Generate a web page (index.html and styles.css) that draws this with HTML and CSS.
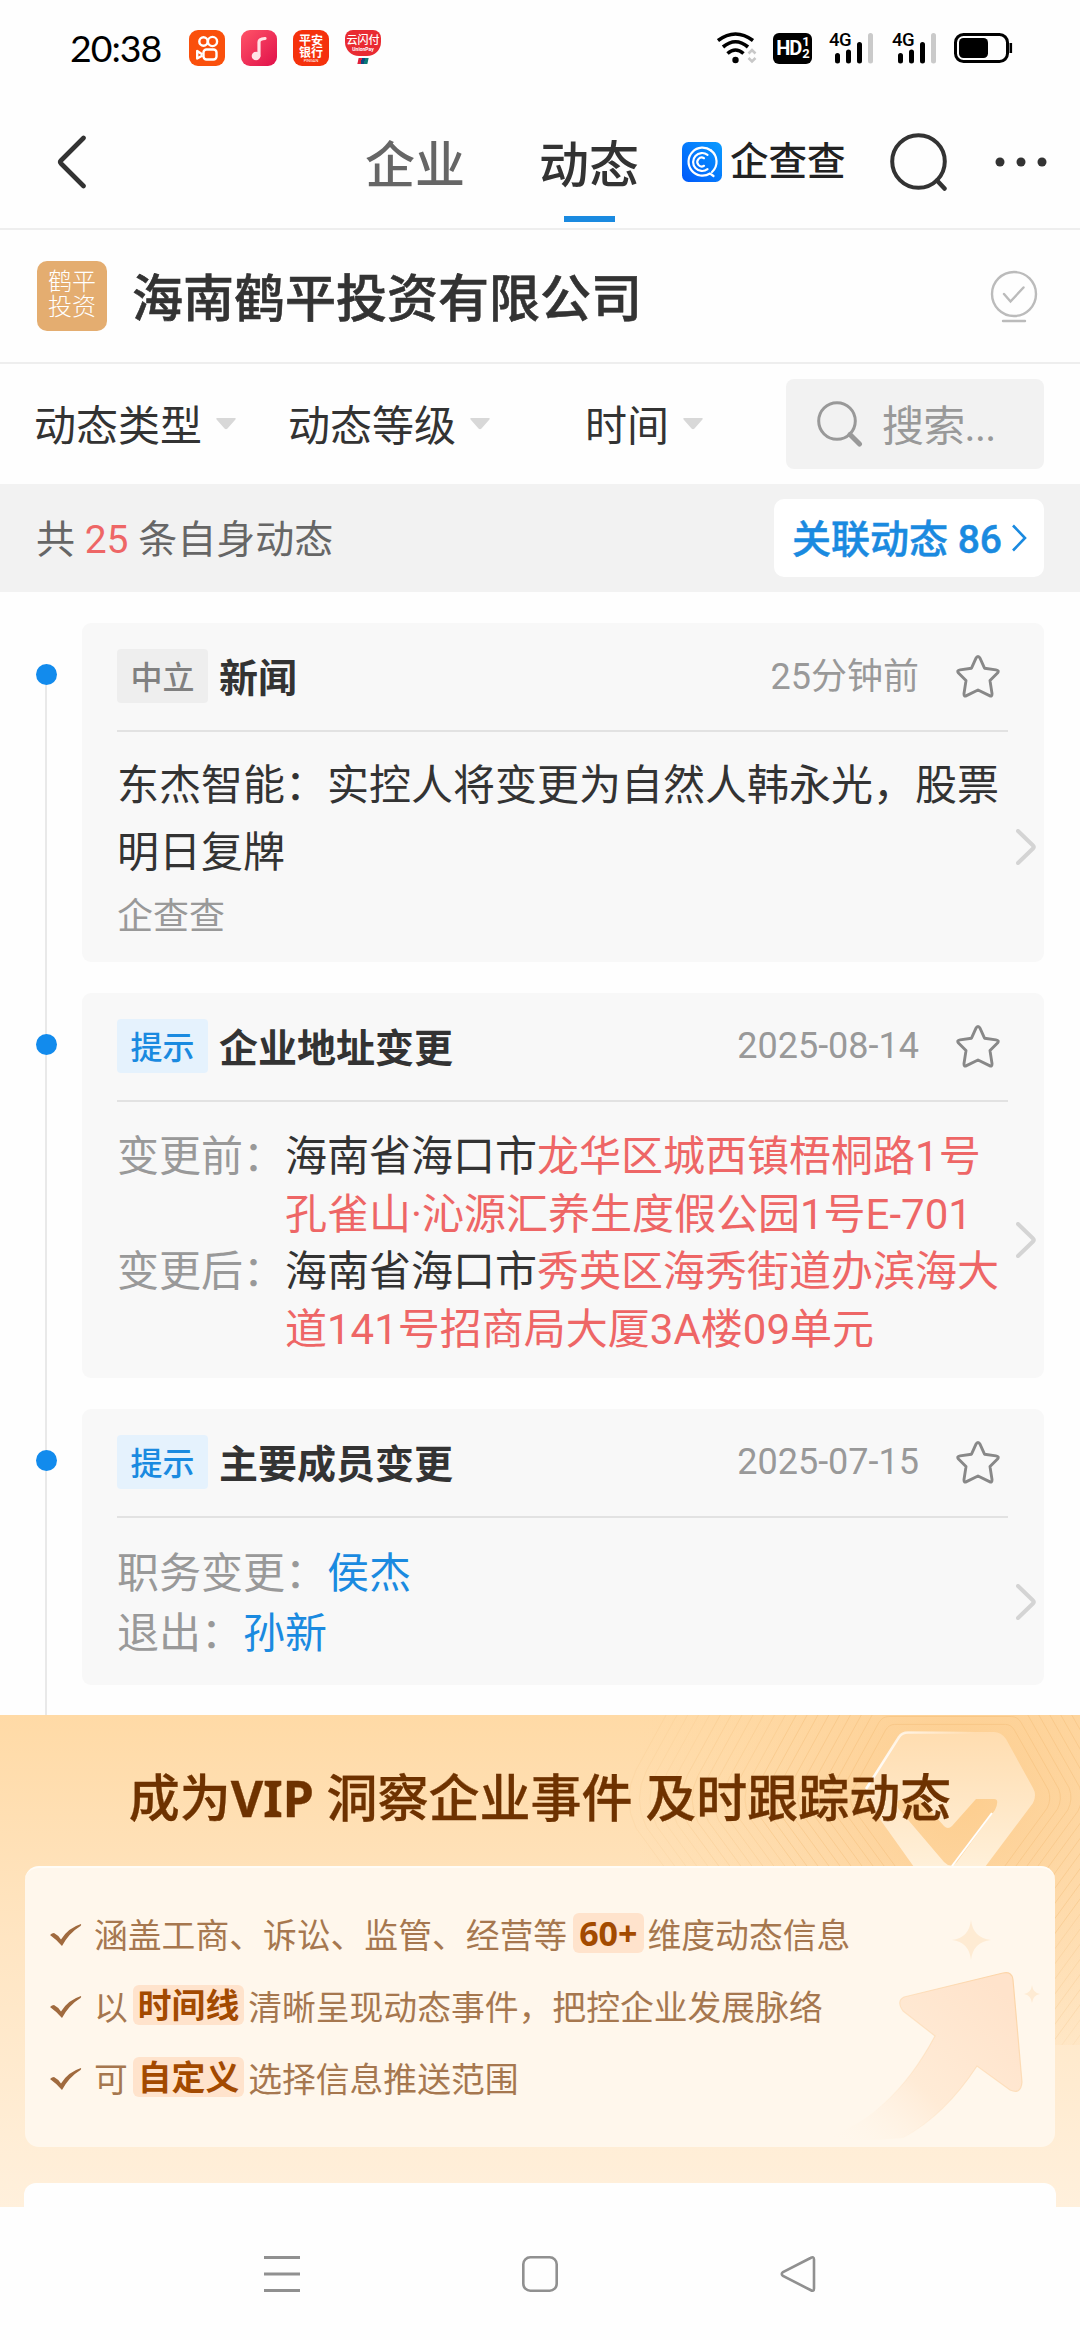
FILE: index.html
```html
<!DOCTYPE html>
<html lang="zh-CN">
<head>
<meta charset="utf-8">
<title>企查查 - 动态</title>
<link rel="stylesheet" href="styles.css">
</head>
<body>
<svg width="0" height="0" class="defs">
  <symbol id="star" viewBox="0 0 44 44"><path d="M22 2.500Q23.200 2.500 24 4.200L28.500 14.200L40 15.900Q43.500 16.500 41.500 19L34 26.600L36 39.500Q36.200 43 33.500 41.600L22 36L10.500 41.600Q7.800 43 8 39.500L10 26.600L2.500 19Q.5 16.500 4 15.900L15.500 14.200L20 4.200Q20.800 2.500 22 2.500Z" fill="none" stroke="#888" stroke-width="2.900" stroke-linejoin="round"/></symbol>
  <symbol id="more" viewBox="0 0 20 36"><path d="M2 2L17 16.500Q18.500 18 17 19.500L2 34" fill="none" stroke="#d4d4d4" stroke-width="4" stroke-linecap="round"/></symbol>
  <symbol id="tri" viewBox="0 0 20 12"><path d="M1 0H19Q20.500 .5 19 2L11.500 10.500Q10 12 8.500 10.500L1 2Q-.5 .5 1 0Z" fill="#d8d8d8"/></symbol>
  <symbol id="tick" viewBox="0 0 32 24"><path d="M0 12Q2 10 4 10Q8 12 11 16.500Q18 5 31 1Q31.500 2 30.500 3Q19 10 12 23Q7 17 0 12Z" fill="#a06a3e"/></symbol>
  <symbol id="bars" viewBox="0 0 46 32"><path d="M8.500 23.500V29M19.500 20V29M30.500 12.500V29" stroke="#000" stroke-width="5" stroke-linecap="round"/><path d="M41.500 3.500V29" stroke="#cacaca" stroke-width="5" stroke-linecap="round"/></symbol>
</svg>
<div class="screen">
  <header class="status">
    <span class="clock">20:38</span>
    <div class="apps">
      <svg width="36" height="36" viewBox="0 0 36 36"><rect width="36" height="36" rx="9" fill="#fa500c"/><g fill="none" stroke="#fff" stroke-width="2.400"><circle cx="14.500" cy="11.500" r="4.200"/><circle cx="23.500" cy="11.500" r="4.600"/><rect x="14.500" y="19.500" width="13" height="10" rx="3"/><path d="M13.500 24.500L8.200 21V28.500L13.500 25.500" stroke-linejoin="round"/></g></svg>
      <svg width="36" height="36" viewBox="0 0 36 36"><defs><linearGradient id="mg" x1="0" y1="0" x2="1" y2="1"><stop offset="0" stop-color="#ff5468"/><stop offset="1" stop-color="#e0104a"/></linearGradient></defs><rect width="36" height="36" rx="9" fill="url(#mg)"/><circle cx="15" cy="26" r="4.300" fill="#ffe3e6"/><path d="M18 26V12Q18 9 24 8.500" fill="none" stroke="#ffe3e6" stroke-width="3.200" stroke-linecap="round"/></svg>
      <div class="bank"><b>平安</b><b>银行</b><i>PINGAN</i></div>
      <div class="pay"><div class="pay-face"><b>云闪付</b><i>UnionPay</i></div><div class="pay-stem"></div></div>
    </div>
    <div class="indicators">
      <svg width="40" height="32" viewBox="0 0 40 32"><g fill="none" stroke="#000" stroke-width="3.600"><path d="M1 8.500Q18.500-4.500 36 8.500"/><path d="M6 15Q18.500 4.500 31 15"/><path d="M10.500 21.500Q18.500 14.500 26.500 21.500"/></g><circle cx="18.500" cy="28" r="3.200"/><path d="M31.500 21.500L35 18L38.500 21.500M31.500 26L35 29.500L38.500 26" fill="none" stroke="#c8c8c8" stroke-width="2.600"/></svg>
      <div class="hd"><b>HD</b><span><b>1</b><b>2</b></span></div>
      <div class="sig"><svg width="46" height="32"><use href="#bars"/></svg><span>4G</span></div>
      <div class="sig"><svg width="46" height="32"><use href="#bars"/></svg><span>4G</span></div>
      <svg width="60" height="32" viewBox="0 0 60 32"><rect x="1.500" y="2.500" width="52" height="27" rx="8" fill="none" stroke="#000" stroke-width="3"/><rect x="5" y="6" width="29" height="20" rx="4.500"/><path d="M56.800 11V21" stroke="#000" stroke-width="2.600"/></svg>
    </div>
  </header>

  <nav class="topbar">
    <svg class="back" width="30" height="54" viewBox="0 0 30 54"><path d="M27.500 3L5 25.500Q3.500 27 5 28.500L27.500 51" fill="none" stroke="#333" stroke-width="4.600" stroke-linecap="round"/></svg>
    <span class="tab">企业</span>
    <span class="tab active">动态</span>
    <div class="brand">
      <svg width="40" height="40" viewBox="0 0 40 40"><defs><linearGradient id="bg" x1="0" y1="1" x2="1" y2="0"><stop offset="0" stop-color="#0058fa"/><stop offset="1" stop-color="#0a9cff"/></linearGradient></defs><rect width="40" height="40" rx="6.500" fill="url(#bg)"/><g fill="none" stroke="#fff" stroke-width="2.200" stroke-linecap="round"><path d="M29 8.500A14 14 0 1 0 28 31.500L31.500 34"/><path d="M29 8.500A14 14 0 0 1 30 30"/><path d="M25.500 12.800A9 9 0 1 0 25.500 27.200"/><path d="M22 16.200A4.400 4.400 0 1 0 22 23.800"/></g></svg>
      <span>企查查</span>
    </div>
    <svg class="find" width="58" height="58" viewBox="0 0 58 58"><circle cx="28.500" cy="28.500" r="26.300" fill="none" stroke="#333" stroke-width="4"/><path d="M47 47.500L54.500 55.500" stroke="#333" stroke-width="4.500" stroke-linecap="round"/></svg>
    <svg class="dots" width="52" height="10" viewBox="0 0 52 10"><g fill="#333"><circle cx="5" cy="5" r="4.500"/><circle cx="26" cy="5" r="4.500"/><circle cx="47" cy="5" r="4.500"/></g></svg>
  </nav>

  <section class="company">
    <div class="logo">鹤平<br>投资</div>
    <h1>海南鹤平投资有限公司</h1>
    <svg width="48" height="56" viewBox="0 0 48 56"><g fill="none" stroke="#bbb" stroke-width="2.400" stroke-linecap="round"><circle cx="24" cy="24" r="22"/><path d="M14 24L20.500 31.500L33.500 17.500"/><path d="M13 51H35"/></g></svg>
  </section>

  <section class="filters">
    <div class="filter"><span>动态类型</span><svg width="20" height="12"><use href="#tri"/></svg></div>
    <div class="filter level"><span>动态等级</span><svg width="20" height="12"><use href="#tri"/></svg></div>
    <div class="filter time"><span>时间</span><svg width="20" height="12"><use href="#tri"/></svg></div>
    <div class="search"><svg width="46" height="46" viewBox="0 0 46 46"><circle cx="20" cy="20" r="18.300" fill="none" stroke="#999" stroke-width="3"/><path d="M33 33.500L42.500 43" stroke="#999" stroke-width="5" stroke-linecap="round"/></svg><span>搜索...</span></div>
  </section>

  <section class="summary">
    <p>共 <em>25</em> 条自身动态</p>
    <div class="related"><span>关联动态 86</span><svg width="18" height="28" viewBox="0 0 18 28"><path d="M3 1.500L15 14L3 26.500" fill="none" stroke="#1a8ae0" stroke-width="2.600"/></svg></div>
  </section>

  <main class="timeline">
    <article class="card news">
      <div class="head"><span class="tag">中立</span><h2>新闻</h2><time>25分钟前</time><svg width="44" height="44"><use href="#star"/></svg></div>
      <div class="body">
        <p>东杰智能：实控人将变更为自然人韩永光，股票<br>明日复牌</p>
        <small>企查查</small>
        <svg class="more" width="20" height="36"><use href="#more"/></svg>
      </div>
    </article>
    <article class="card address">
      <div class="head"><span class="tag hint">提示</span><h2>企业地址变更</h2><time>2025-08-14</time><svg width="44" height="44"><use href="#star"/></svg></div>
      <div class="body">
        <div class="field"><span>变更前：</span><p>海南省海口市<em>龙华区城西镇梧桐路1号<br>孔雀山·沁源汇养生度假公园1号E-701</em></p></div>
        <div class="field"><span>变更后：</span><p>海南省海口市<em>秀英区海秀街道办滨海大<br>道141号招商局大厦3A楼09单元</em></p></div>
        <svg class="more" width="20" height="36"><use href="#more"/></svg>
      </div>
    </article>
    <article class="card member">
      <div class="head"><span class="tag hint">提示</span><h2>主要成员变更</h2><time>2025-07-15</time><svg width="44" height="44"><use href="#star"/></svg></div>
      <div class="body">
        <div class="field"><span>职务变更：</span><a>侯杰</a></div>
        <div class="field"><span>退出：</span><a>孙新</a></div>
        <svg class="more" width="20" height="36"><use href="#more"/></svg>
      </div>
    </article>
  </main>

  <section class="vip">
    <svg class="deco" width="560" height="330" viewBox="520 1715 560 330">
      <defs>
        <linearGradient id="hex" x1="0" y1="0" x2="0" y2="1"><stop offset="0" stop-color="#ffddb0"/><stop offset="1" stop-color="#fff0d9"/></linearGradient>
        <linearGradient id="edge" x1="0" y1="0" x2="1" y2="0"><stop offset="0" stop-color="#fff"/><stop offset="1" stop-color="#fff" stop-opacity="0"/></linearGradient>
        <radialGradient id="glow" cx="960" cy="1790" r="330" gradientUnits="userSpaceOnUse"><stop offset="0" stop-color="#fdcd8d"/><stop offset=".4" stop-color="#fdd095" stop-opacity=".55"/><stop offset="1" stop-color="#ffd9a2" stop-opacity="0"/></radialGradient>
        <path id="ring" d="M-49-66H49Q54-66 57-61L87-8Q90 0 86 8L8 115Q0 122-8 115L-86 8Q-90 0-86-8L-57-61Q-54-66-49-66Z" fill="none" stroke="#f0b468" vector-effect="non-scaling-stroke"/>
      </defs>
      <rect x="520" y="1715" width="560" height="330" fill="url(#glow)"/>
      <g opacity=".32" transform="translate(950 1799)">
        <use href="#ring" transform="scale(1.13)"/><use href="#ring" transform="scale(1.25)"/><use href="#ring" transform="scale(1.37)"/><use href="#ring" transform="scale(1.49)"/><use href="#ring" transform="scale(1.61)"/><use href="#ring" transform="scale(1.73)"/><use href="#ring" transform="scale(1.85)"/><use href="#ring" transform="scale(1.97)"/><use href="#ring" transform="scale(2.09)"/><use href="#ring" transform="scale(2.21)"/>
        <g opacity=".6"><use href="#ring" transform="scale(2.33)"/><use href="#ring" transform="scale(2.45)"/><use href="#ring" transform="scale(2.57)"/><use href="#ring" transform="scale(2.69)"/><use href="#ring" transform="scale(2.81)"/><use href="#ring" transform="scale(2.93)"/><use href="#ring" transform="scale(3.05)"/></g>
        <g opacity=".35"><use href="#ring" transform="scale(3.17)"/><use href="#ring" transform="scale(3.29)"/><use href="#ring" transform="scale(3.41)"/><use href="#ring" transform="scale(3.53)"/><use href="#ring" transform="scale(3.65)"/></g>
      </g>
      <path fill-rule="evenodd" fill="url(#hex)" d="M908 1732H994Q1001 1732 1006 1739L1033 1788Q1037 1795 1033 1803L985 1867H914L867 1801Q863 1795 867 1787L899 1737Q902 1732 908 1732ZM976 1799L952 1826Q948 1830 944 1826L921 1800H900Q894 1801 898 1808L944 1862Q951 1869 957 1862L995 1810Q1000 1799 994 1799Z"/>
      <path d="M866 1789L899 1737Q902 1732.500 908 1732.500H975" fill="none" stroke="url(#edge)" stroke-width="2.500"/>
      <path d="M952 1866L992 1813" stroke="#fff" stroke-width="2"/>
    </svg>
    <h2>成为<b>VIP</b> 洞察企业事件 及时跟踪动态</h2>
    <div class="perks">
      <svg class="arrow" width="240" height="240" viewBox="815 1907 240 240">
        <defs><linearGradient id="ar" x1="1000" y1="1990" x2="840" y2="2150" gradientUnits="userSpaceOnUse"><stop offset="0" stop-color="#ffe3cb"/><stop offset=".55" stop-color="#ffebd6"/><stop offset="1" stop-color="#fff7ec" stop-opacity="0"/></linearGradient><linearGradient id="ae" x1="1010" y1="1990" x2="880" y2="2120" gradientUnits="userSpaceOnUse"><stop offset="0" stop-color="#fcd5a8"/><stop offset="1" stop-color="#fcd5a8" stop-opacity="0"/></linearGradient></defs>
        <path d="M904 1997L1003 1973Q1012 1971 1013 1980L1022 2082Q1021 2095 1010 2090L977 2066Q945 2115 903 2138Q860 2142 820 2139Q890 2120 935 2036L903 2011Q896 2001 904 1997Z" fill="url(#ar)" stroke="url(#ae)" stroke-width="1.200"/>
        <path d="M971 1920Q973 1938 991 1940Q973 1942 971 1960Q969 1942 952 1940Q969 1938 971 1920ZM1032 1985Q1033 1993 1040 1994Q1033 1995 1032 2003Q1031 1995 1024 1994Q1031 1993 1032 1985Z" fill="#feebd3"/>
      </svg>
      <div class="perk"><svg width="32" height="24"><use href="#tick"/></svg><span>涵盖工商、诉讼、监管、经营等</span><mark class="num">60+</mark><span>维度动态信息</span></div>
      <div class="perk"><svg width="32" height="24"><use href="#tick"/></svg><span>以</span><mark>时间线</mark><span>清晰呈现动态事件，把控企业发展脉络</span></div>
      <div class="perk"><svg width="32" height="24"><use href="#tick"/></svg><span>可</span><mark>自定义</mark><span>选择信息推送范围</span></div>
    </div>
    <div class="sheet"></div>
  </section>

  <footer class="sysnav">
    <svg width="36" height="38" viewBox="0 0 36 38"><path d="M0 2.500H36M0 19H36M0 35.500H36" stroke="#909090" stroke-width="3"/></svg>
    <svg width="36" height="38" viewBox="0 0 36 38"><rect x="1.300" y="2.300" width="33.400" height="33.400" rx="7" fill="none" stroke="#909090" stroke-width="2.600"/></svg>
    <svg width="36" height="38" viewBox="0 0 36 38"><path d="M30.500 3Q34 1 34 4.500V33.500Q34 37 30.500 35L3 21Q.5 19 3 17Z" fill="none" stroke="#909090" stroke-width="2.600"/></svg>
  </footer>
</div>
</body>
</html>
```
FILE: styles.css
```css
* { box-sizing: border-box; }
body, h1, h2, p { margin: 0; }
body {
  background: #fff;
  color: #333;
  font-family: Roboto, "Noto Sans CJK SC", sans-serif;
}
em, i { font-style: normal; }
svg { flex: none; display: block; }
.defs { position: absolute; }
.screen { width: 1080px; height: 2340px; display: flex; flex-direction: column; overflow: hidden; background: #fefefe; }

/* Status bar */
.status { height: 96px; display: flex; align-items: center; padding-left: 70px; color: #000; }
.clock { width: 119px; padding-bottom: 1px; font: 37.500px Lato, sans-serif; letter-spacing: -1px; white-space: nowrap; }
.apps { display: flex; gap: 16px; }
.bank { width: 36px; height: 36px; border-radius: 9px; background: #f5310c; color: #fff; text-align: center; padding-top: 5px; font-size: 12px; line-height: 12px; }
.bank b { display: block; }
.bank i { display: block; font-size: 4px; line-height: 4px; }
.pay { width: 36px; height: 36px; }
.pay-face { height: 26px; border-radius: 8px 8px 14px 14px; background: #e92b32; color: #fff; text-align: center; padding-top: 5px; font-size: 11px; line-height: 12px; white-space: nowrap; }
.pay-face b { font-weight: 500; display: block; }
.pay-face i { display: block; font: bold 5px/5px Roboto, sans-serif; }
.pay-stem { width: 10px; height: 6px; margin: 2px auto 0; background: linear-gradient(90deg, #e0203a 33%, #12457e 33% 66%, #087b78 66%); transform: skewX(-12deg); }
.indicators { margin-left: 336px; display: flex; align-items: center; }
.hd { width: 39px; height: 31px; margin-left: 16px; border-radius: 6px; background: #000; color: #fff; display: flex; align-items: center; justify-content: center; font: 20px/1 Roboto, sans-serif; letter-spacing: -1px; }
.hd span { display: flex; flex-direction: column; font-size: 13px; line-height: 12px; margin-left: 1px; }
.sig { position: relative; margin-left: 17px; }
.sig span { position: absolute; left: 0; top: -1px; font-size: 18.500px; line-height: 18px; font-weight: 500; letter-spacing: -.5px; }
.sig + svg { margin-left: 16px; }

/* Top navigation */
.topbar { height: 134px; display: flex; align-items: center; border-bottom: 2px solid #eee; padding-left: 56px; }
.tab { margin-left: 279px; padding-top: 8px; font-size: 50px; font-weight: 500; line-height: 60px; color: #666; }
.tab.active { margin-left: 74px; color: #333; position: relative; }
.tab.active::after { content: ""; position: absolute; left: 25px; top: 88px; width: 51px; height: 6px; background: #1a8ae0; }
.brand { margin-left: 43px; display: flex; align-items: center; gap: 8px; font-size: 38.500px; line-height: 46px; font-weight: 500; color: #222; }
.find { margin-left: 44px; }
.dots { margin-left: 47px; }

/* Company */
.company { height: 134px; display: flex; align-items: center; padding: 0 42px 0 37px; border-bottom: 2px solid #eee; }
.company svg { margin-top: 3px; }
.logo { width: 70px; height: 70px; border-radius: 10px; background: #e4ad70; color: #fff; font-size: 24px; line-height: 25px; font-weight: 300; text-align: center; padding-top: 9px; }
.company h1 { margin-left: 25px; padding-bottom: 2px; flex: 1; font-size: 51px; font-weight: 500; -webkit-text-stroke: .6px; }

/* Filters */
.filters { height: 120px; display: flex; align-items: center; padding: 0 36px 0 34px; font-size: 42px; }
.filters span { padding-bottom: 4px; }
.filter { display: flex; align-items: center; gap: 14px; }
.level { margin-left: 52px; }
.time { margin-left: 95px; }
.search { margin-left: auto; width: 258px; height: 90px; padding-left: 31px; border-radius: 8px; background: #f2f2f2; display: flex; align-items: center; gap: 19px; color: #999; }
.search span { letter-spacing: -.7px; }

/* Summary bar */
.summary { height: 108px; padding: 0 36px; display: flex; align-items: center; justify-content: space-between; background: #f2f2f2; font-size: 39px; color: #666; }
.summary p, .related span { padding-bottom: 4px; }
.summary em { color: #ee6666; }
.related { width: 270px; height: 78px; border-radius: 10px; background: #fff; color: #1a8ae0; font-weight: 500; -webkit-text-stroke: .5px; display: flex; align-items: center; gap: 8px; padding-left: 18px; }

/* Timeline */
.timeline { height: 1123px; padding: 31px 36px 0 82px; display: flex; flex-direction: column; gap: 31px; position: relative; }
.timeline::before { content: ""; position: absolute; left: 45px; top: 83px; bottom: 0; width: 2px; background: #e9e9e9; }
.card { position: relative; background: #f8f8f8; border-radius: 9px; padding: 26px 36px 0 35px; display: flex; flex-direction: column; }
.card::before { content: ""; position: absolute; left: -46px; top: 41px; width: 21px; height: 21px; border-radius: 50%; background: #128bed; }
.news { height: 339px; }
.address { height: 385px; }
.member { height: 276px; }
.head { display: flex; align-items: center; height: 83px; padding: 1px 8px 28px 0; border-bottom: 2px solid #e2e2e2; }
.tag { width: 91px; height: 54px; border-radius: 4px; background: #eee; color: #808080; font-size: 32px; font-weight: 500; line-height: 58px; text-align: center; }
.tag.hint { background: #e5f2fd; color: #1a8ae0; }
.head h2 { margin-left: 11px; font-size: 39px; font-weight: 700; padding-bottom: 2px; }
.head time { margin-left: auto; font-size: 36px; color: #999; margin-right: 37px; }
.news time { padding-bottom: 6px; }
.body { flex: 1; position: relative; font-size: 42px; padding-top: 20px; }
.body .more { position: absolute; right: -28px; top: 50%; margin-top: -18px; }
.news .body p { line-height: 67px; white-space: nowrap; }
.news small { display: block; padding-top: 1px; font-size: 36px; line-height: 60px; color: #999; }
.field { display: flex; line-height: 57.700px; white-space: nowrap; }
.address .body { padding-top: 26px; }
.member .body { padding-top: 26px; }
.member .field { line-height: 60px; }
.field span { color: #999; }
.field em { color: #ee6666; }
.field a { color: #1a8ae0; }

/* VIP panel */
.vip { height: 492px; position: relative; background: linear-gradient(#ffdaa6, #ffe5c2 45%, #fff0dc); display: flex; flex-direction: column; align-items: center; overflow: hidden; }
.vip > * { flex: none; }
.deco { position: absolute; right: 0; top: 0; }
.vip h2 { position: relative; height: 151px; padding-top: 48px; line-height: 70px; font-size: 51px; font-weight: 500; color: #6e3200; white-space: nowrap; -webkit-text-stroke: .3px; }
.vip h2 b { font-family: "Noto Sans", sans-serif; font-size: 50px; }
.perks { position: relative; width: 1030px; height: 281px; border-radius: 14px; border-top: 2px solid #fffdf8; background: #fff7ec; padding: 29px 25px 0; }
.arrow { position: absolute; right: 0; bottom: 0; }
.perk { position: relative; height: 72px; display: flex; align-items: center; font-size: 33.800px; color: #a6774f; white-space: nowrap; }
.perk svg { margin: 3px 12px 0 0; }
.perk mark { height: 40px; line-height: 43px; margin: 0 4px 0 5px; padding: 0 5px; border-radius: 6px; background: #ffe3cc; color: #a34a00; font-weight: 700; }
.perk .num { font-family: "Noto Sans", sans-serif; font-size: 34px; line-height: 40px; padding: 0 6px; margin-left: 6px; }
.sheet { width: 1032px; height: 30px; margin-top: 36px; border-radius: 12px 12px 0 0; background: #fefefe; }

/* System navigation */
.sysnav { flex: 1; display: flex; justify-content: center; gap: 222px; padding-top: 48px; }
```
